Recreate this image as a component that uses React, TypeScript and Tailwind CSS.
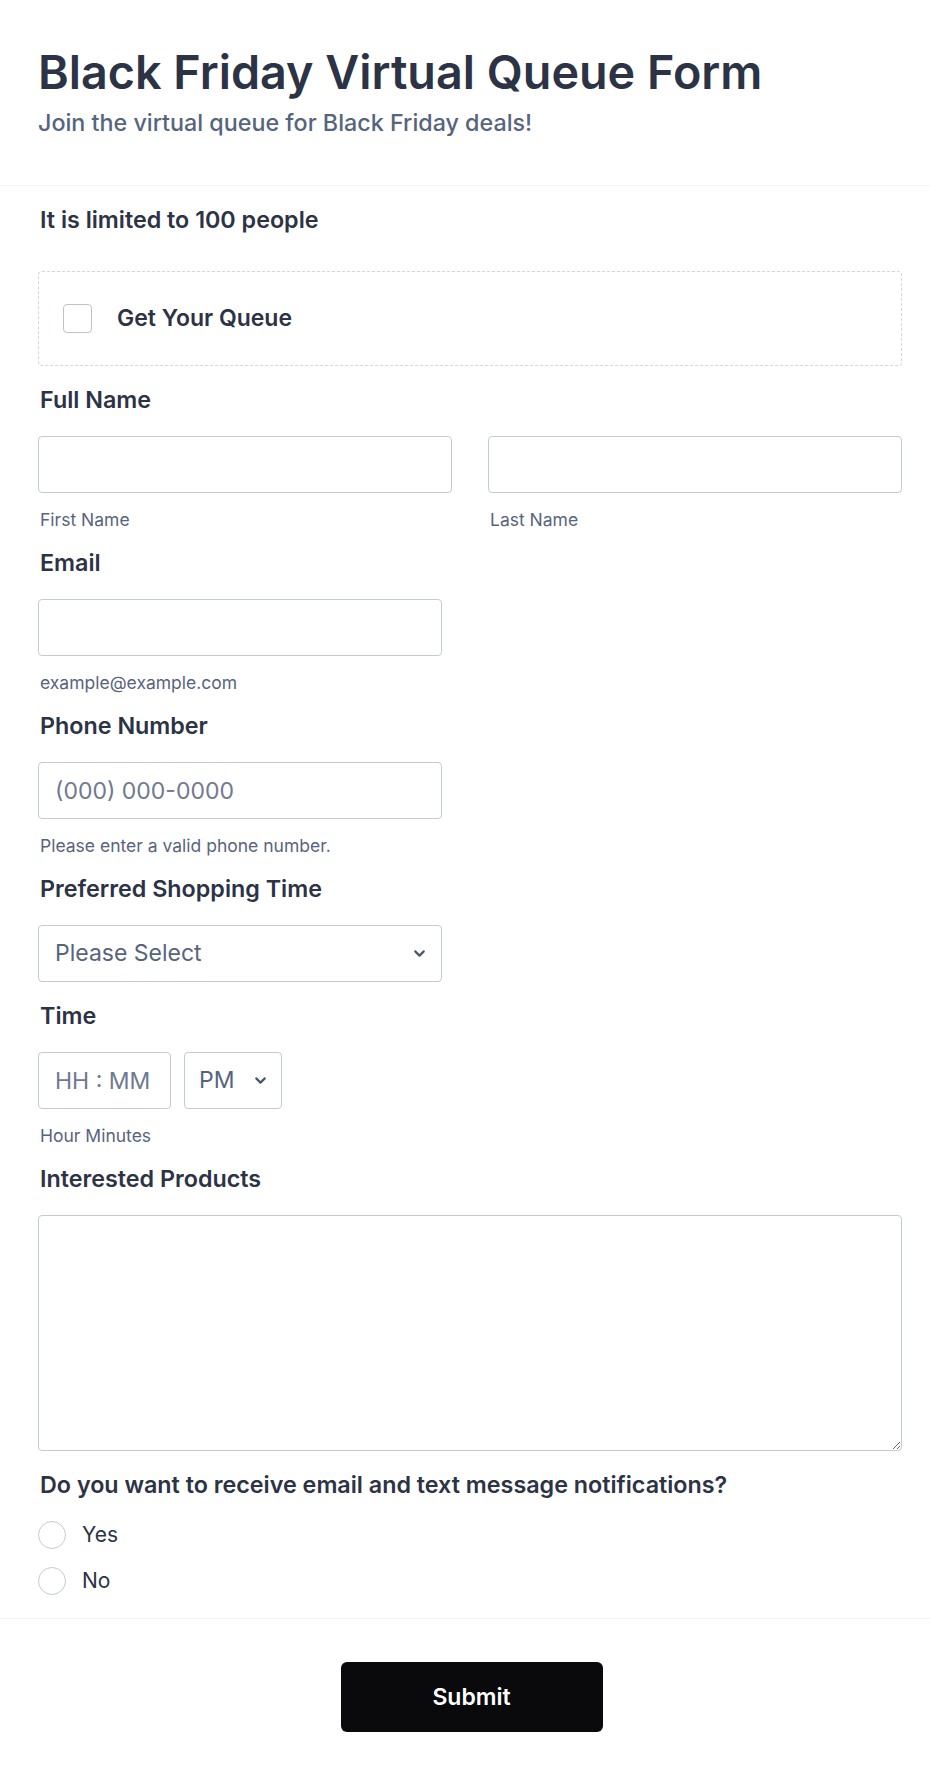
import { ChevronDown } from "lucide-react";

const font = { fontFamily: "Inter, 'Noto Sans', sans-serif" };

function Label({ children }: { children: React.ReactNode }) {
    return (
        <div className="pl-[2px] text-[23.3px] leading-[28px] font-semibold text-[#2c3345]">
            {children}
        </div>
    );
}

function SubLabel({ children }: { children: React.ReactNode }) {
    return (
        <div className="mt-[18px] pl-[2px] text-[17.5px] leading-[18px] text-[#57647e]">
            {children}
        </div>
    );
}

const inputClass =
    "h-[57px] rounded-[4px] border border-[#c3cad8] bg-white px-[16px] text-[23px] text-[#2c3345] placeholder-[#6f7a90] outline-none";

function App() {
    return (
        <div className="min-h-[1775px] w-full bg-white" style={font}>
            {/* header */}
            <div className="pl-[38px] pr-[28px] pt-[44px] pb-[48px]">
                <h1 className="text-[46.7px] leading-[56px] font-semibold text-[#2c3345]">
                    Black Friday Virtual Queue Form
                </h1>
                <p className="mt-[9px] text-[23.3px] leading-[28px] font-medium text-[#57647e]">
                    Join the virtual queue for Black Friday deals!
                </p>
            </div>

            <div className="border-t border-[#f3f3fe] pl-[38px] pr-[28px]">
                <div className="pt-[20px]">
                    <Label>It is limited to 100 people</Label>
                </div>

                <div className="mt-[37px] flex h-[95px] items-center rounded-[4px] border border-dashed border-[#d3d6dd] pl-[24px]">
                    <span className="h-[29px] w-[29px] rounded-[4px] border-[1.5px] border-[#bcc3d2] bg-white" />
                    <span className="ml-[25px] text-[23px] font-semibold text-[#2c3345]">
                        Get Your Queue
                    </span>
                </div>

                {/* full name */}
                <div className="pt-[20px]">
                    <Label>Full Name</Label>
                    <div className="mt-[22px] grid grid-cols-2 gap-x-[36px]">
                        <div>
                            <input className={inputClass + " w-full"} />
                            <SubLabel>First Name</SubLabel>
                        </div>
                        <div>
                            <input className={inputClass + " w-full"} />
                            <SubLabel>Last Name</SubLabel>
                        </div>
                    </div>
                </div>

                <div className="pt-[20px]">
                    <Label>Email</Label>
                    <input className={inputClass + " mt-[22px] block w-[404px]"} />
                    <SubLabel>example@example.com</SubLabel>
                </div>

                <div className="pt-[20px]">
                    <Label>Phone Number</Label>
                    <input
                        className={inputClass + " mt-[22px] block w-[404px]"}
                        placeholder="(000) 000-0000"
                    />
                    <SubLabel>Please enter a valid phone number.</SubLabel>
                </div>

                <div className="pt-[20px]">
                    <Label>Preferred Shopping Time</Label>
                    <div className="mt-[22px] flex h-[57px] w-[404px] items-center justify-between rounded-[4px] border border-[#c3cad8] pl-[16px] pr-[13px]">
                        <span className="text-[23px] text-[#57647e]">Please Select</span>
                        <ChevronDown size={17} strokeWidth={3} className="text-[#4b5569]" />
                    </div>
                </div>

                <div className="pt-[20px]">
                    <Label>Time</Label>
                    <div className="mt-[22px] flex gap-[13px]">
                        <input
                            className={inputClass + " w-[133px]"}
                            placeholder="HH : MM"
                        />
                        <div className="flex h-[57px] w-[98px] items-center justify-between rounded-[4px] border border-[#c3cad8] pl-[14px] pr-[12px]">
                            <span className="text-[23px] text-[#57647e]">PM</span>
                            <ChevronDown size={17} strokeWidth={3} className="text-[#4b5569]" />
                        </div>
                    </div>
                    <SubLabel>Hour Minutes</SubLabel>
                </div>

                <div className="pt-[20px]">
                    <Label>Interested Products</Label>
                    <textarea className="mt-[22px] block h-[236px] w-full rounded-[4px] border border-[#c3cad8] bg-white p-3 text-[23px] outline-none" />
                </div>

                <div className="pt-[20px] pb-[14px]">
                    <Label>Do you want to receive email and text message notifications?</Label>
                    <div className="mt-[13px] flex flex-col">
                        {["Yes", "No"].map((opt) => (
                            <label key={opt} className="flex h-[46px] items-center">
                                <span className="h-[28px] w-[28px] rounded-full border-[1.5px] border-[#c3cad8] bg-white" />
                                <span className="ml-[16px] text-[21px] text-[#2c3345]">{opt}</span>
                            </label>
                        ))}
                    </div>
                </div>
            </div>

            <div className="flex justify-center border-t border-[#f3f3fe] pl-[41px] pr-[28px] pt-[43px]">
                <button className="h-[70px] w-[262px] rounded-[6px] bg-[#0a0a0c] text-[23px] font-semibold text-white">
                    Submit
                </button>
            </div>
        </div>
    );
}

export default App;
